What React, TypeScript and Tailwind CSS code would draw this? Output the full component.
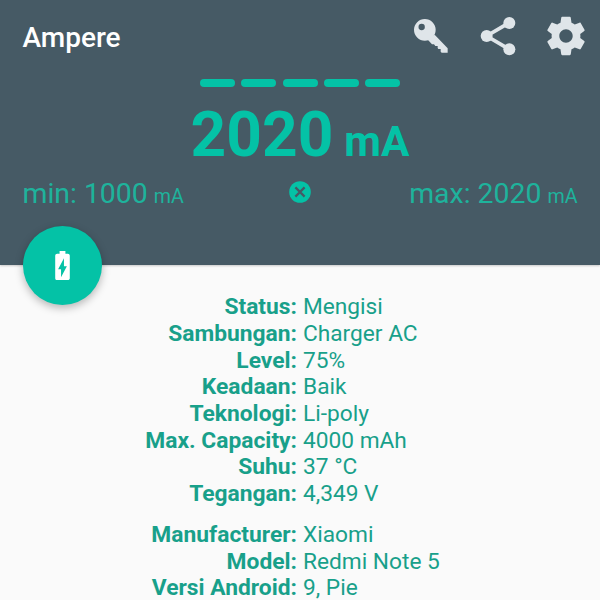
import React from "react";

type Row = { label: string; value: string };

const battery: Row[] = [
  { label: "Status:", value: "Mengisi" },
  { label: "Sambungan:", value: "Charger AC" },
  { label: "Level:", value: "75%" },
  { label: "Keadaan:", value: "Baik" },
  { label: "Teknologi:", value: "Li-poly" },
  { label: "Max. Capacity:", value: "4000 mAh" },
  { label: "Suhu:", value: "37 °C" },
  { label: "Tegangan:", value: "4,349 V" },
];

const device: Row[] = [
  { label: "Manufacturer:", value: "Xiaomi" },
  { label: "Model:", value: "Redmi Note 5" },
  { label: "Versi Android:", value: "9, Pie" },
];

function KeyIcon() {
  return (
    <svg className="h-[40px] w-[40px]" viewBox="30 45 120 120" fill="currentColor">
      <path
        fillRule="evenodd"
        d="M42 89.500a32.500 32.500 0 1 0 65 0a32.500 32.500 0 1 0 -65 0zM55.500 81a9.500 9.500 0 1 0 19 0a9.500 9.500 0 1 0 -19 0z"
      />
      <path d="M104 104L143 145V158H125L122 155V147H115L113 144V138H106L102 133H96L84 120Z" />
    </svg>
  );
}

function ShareIcon() {
  return (
    <svg className="h-[40px] w-[36px]" viewBox="241 48 108 120" fill="currentColor">
      <path d="M329 68L261 108L329 148" fill="none" stroke="currentColor" strokeWidth="11" />
      <circle cx="329" cy="69" r="18" />
      <circle cx="261" cy="108" r="18" />
      <circle cx="329" cy="148" r="18" />
    </svg>
  );
}

function GearIcon() {
  return (
    <svg className="h-[46px] w-[46px]" viewBox="0 0 24 24" fill="currentColor">
      <path d="M19.43 12.98c.04-.32.07-.64.07-.98s-.03-.66-.07-.98l2.11-1.65c.19-.15.24-.42.12-.64l-2-3.46c-.12-.22-.39-.3-.61-.22l-2.49 1c-.52-.4-1.08-.73-1.69-.98l-.38-2.65C14.46 2.18 14.25 2 14 2h-4c-.25 0-.46.18-.49.42l-.38 2.65c-.61.25-1.17.59-1.69.98l-2.49-1c-.23-.09-.49 0-.61.22l-2 3.46c-.13.22-.07.49.12.64l2.11 1.65c-.04.32-.07.65-.07.98s.03.66.07.98l-2.11 1.65c-.19.15-.24.42-.12.64l2 3.46c.12.22.39.3.61.22l2.49-1c.52.4 1.08.73 1.69.98l.38 2.65c.03.24.24.42.49.42h4c.25 0 .46-.18.49-.42l.38-2.65c.61-.25 1.17-.59 1.69-.98l2.49 1c.23.09.49 0 .61-.22l2-3.46c.12-.22.07-.49-.12-.64l-2.11-1.65zM12 15.5c-1.93 0-3.5-1.57-3.5-3.5s1.57-3.5 3.5-3.5 3.5 1.57 3.5 3.5-1.57 3.5-3.5 3.5z" />
    </svg>
  );
}

function BatteryIcon() {
  return (
    <svg className="h-[35px] w-[35px]" viewBox="0 0 24 24" fill="currentColor">
      <path d="M15.67 4H14V2h-4v2H8.33C7.6 4 7 4.6 7 5.33v15.33C7 21.4 7.6 22 8.33 22h7.33c.74 0 1.34-.6 1.34-1.33V5.33C17 4.6 16.4 4 15.67 4zM11 20v-5.5H9L13 7v5.5h2L11 20z" />
    </svg>
  );
}

function ResetIcon() {
  return (
    <svg className="h-[22px] w-[22px]" viewBox="0 0 22 22">
      <circle cx="11" cy="11" r="10.8" fill="#04c2a6" />
      <path d="M6.400 6.400l9.200 9.200M15.600 6.400l-9.200 9.200" stroke="#465a65" strokeWidth="2.2" />
    </svg>
  );
}

function Rows({ rows }: { rows: Row[] }) {
  return (
    <dl>
      {rows.map((r) => (
        <div key={r.label} className="flex h-[26.7px] items-baseline text-[22.7px] leading-[26.7px]">
          <dt className="w-[297px] text-right text-[22.8px] font-bold">{r.label}</dt>
          <dd className="ml-[6px]">{r.value}</dd>
        </div>
      ))}
    </dl>
  );
}

export default function App() {
  return (
    <div className="relative h-[600px] w-[600px] overflow-hidden bg-[#fafafa] font-[Roboto,sans-serif] text-[#18a08a]">
      <header className="h-[265px] bg-[#465a65] shadow-[0_1px_2px_rgba(0,0,0,0.2)]">
        <div className="flex h-[79px] items-start pl-[22.5px]">
          <h1 className="mt-[22px] text-[28px] leading-[32px] font-medium text-white">Ampere</h1>
          <div className="ml-auto flex text-[#dfe5e9]">
            <div className="mt-[15px] mr-[70px] w-0">
              <KeyIcon />
            </div>
            <div className="mt-[16px] mr-[63px] w-0">
              <ShareIcon />
            </div>
            <div className="mt-[13px] mr-[57px] w-0">
              <GearIcon />
            </div>
          </div>
        </div>
        <div className="flex h-[8px] justify-center gap-[6.1px]">
          {[0, 1, 2, 3, 4].map((i) => (
            <span key={i} className="h-[8px] w-[35px] rounded-[4px] bg-[#04c2a6]" />
          ))}
        </div>
        <div className="flex h-[91px] items-baseline justify-center font-bold text-[#04c2a6]">
          <span className="mt-[10px] text-[62.2px] leading-[76px]">2020</span>
          <span className="ml-[11px] text-[42.3px]">mA</span>
        </div>
        <div className="grid h-[34px] grid-cols-[1fr_auto_1fr] items-start px-[22.5px] text-[#1eb39c]">
          <span className="text-[28.4px] leading-[32px]">
            min: 1000<span className="ml-[6px] text-[19.7px]">mA</span>
          </span>
          <div className="pt-[3px]">
            <ResetIcon />
          </div>
          <span className="text-right text-[28.4px] leading-[32px]">
            max: 2020<span className="ml-[6px] text-[19.7px]">mA</span>
          </span>
        </div>
      </header>
      <main className="pt-[29.3px]">
        <Rows rows={battery} />
        <div className="h-[14.2px]" />
        <Rows rows={device} />
      </main>
      <button className="absolute top-[225.5px] left-[22.5px] flex h-[79.5px] w-[79.5px] items-center justify-center rounded-full bg-[#04c2a6] text-white shadow-[0_3px_8px_rgba(0,0,0,0.28)]">
        <BatteryIcon />
      </button>
    </div>
  );
}
